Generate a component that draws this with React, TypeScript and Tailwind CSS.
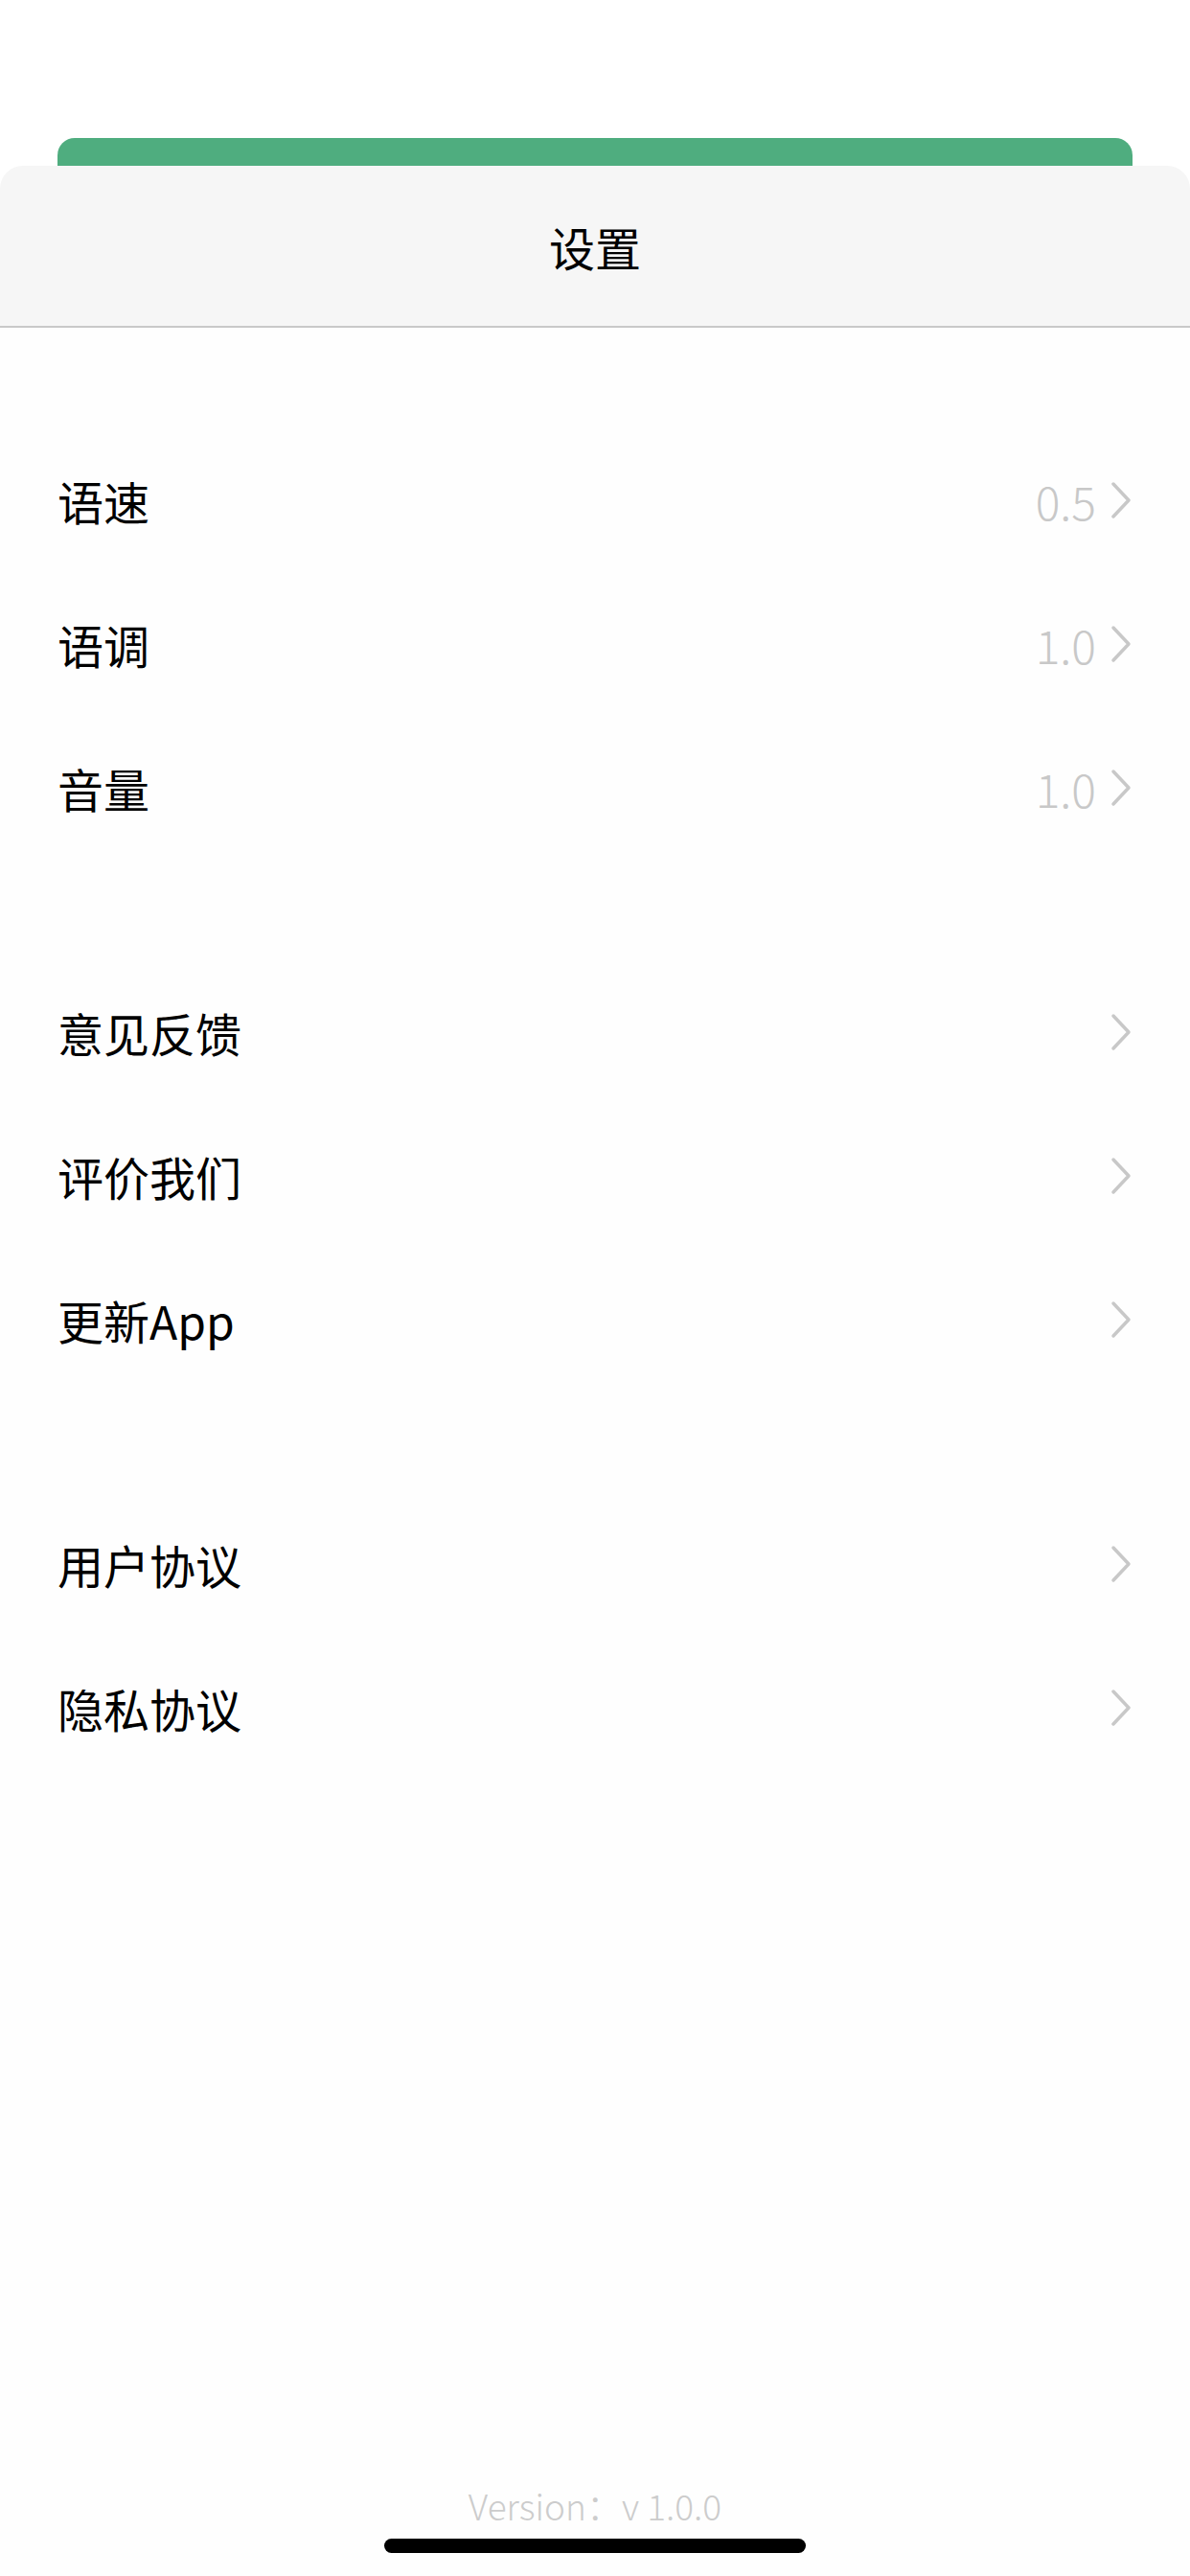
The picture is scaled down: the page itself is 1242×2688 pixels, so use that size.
const groups = [
  [
    { label: '语速', value: '0.5' },
    { label: '语调', value: '1.0' },
    { label: '音量', value: '1.0' },
  ],
  [{ label: '意见反馈' }, { label: '评价我们' }, { label: '更新App' }],
  [{ label: '用户协议' }, { label: '隐私协议' }],
];

function Chevron() {
  return (
    <svg width="24" height="40" viewBox="0 0 24 40" fill="none">
      <path
        d="M4 3 L20 20 L4 37"
        stroke="#c8c8c8"
        strokeWidth="3.5"
        strokeLinecap="round"
        strokeLinejoin="round"
      />
    </svg>
  );
}

function SettingRow({ label, value }: { label: string; value?: string }) {
  return (
    <div className="h-[150px] flex items-center justify-between px-[60px]">
      <span className="text-[48px] leading-none text-black">{label}</span>
      <div className="flex items-center gap-[14px]">
        {value && <span className="text-[48px] leading-none font-light text-[#c8c8c8]">{value}</span>}
        <Chevron />
      </div>
    </div>
  );
}

export default function App() {
  return (
    <div className="h-[2688px] w-[1242px] bg-white flex flex-col font-['Noto_Sans_CJK_SC','Noto_Sans',sans-serif]">
      <div className="h-[144px] shrink-0" />
      <div className="mx-[60px] h-[29px] shrink-0 rounded-t-[18px] bg-[#4fad7f]" />

      <div className="flex-1 flex flex-col rounded-t-[24px] bg-[#fefefe] overflow-hidden">
        {/* header */}
        <div className="h-[169px] shrink-0 flex items-center justify-center bg-[#f6f6f6] border-b-2 border-[#c9c9c9]">
          <span className="text-[48px] leading-none text-black">设置</span>
        </div>

        {groups.map((items, i) => (
          <div key={i} className="mt-[105px]">
            {items.map((item) => (
              <SettingRow key={item.label} label={item.label} value={item.value} />
            ))}
          </div>
        ))}

        <div className="flex-1" />

        <div className="text-center text-[37px] leading-none font-light text-[#cccccc] pb-[16px]">
          Version：v 1.0.0
        </div>
        <div className="h-[39px] flex items-start justify-center">
          <div className="w-[440px] h-[15px] rounded-full bg-black" />
        </div>
      </div>
    </div>
  );
}
